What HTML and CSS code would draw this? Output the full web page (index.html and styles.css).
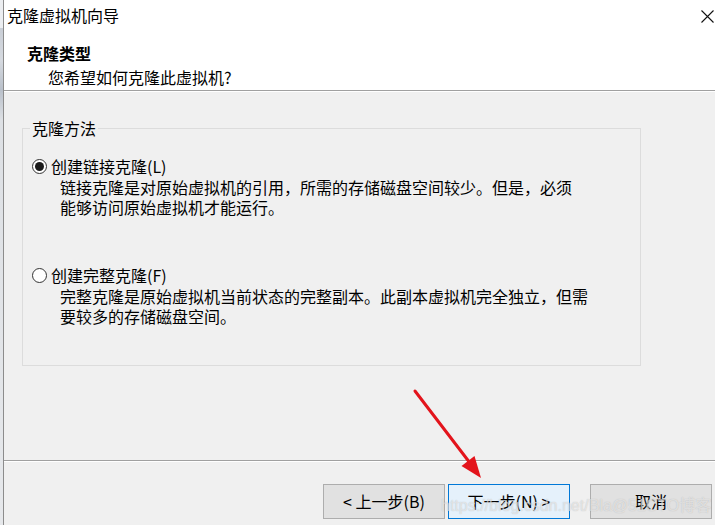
FILE: index.html
```html
<!DOCTYPE html>
<html lang="zh-CN">
<head>
<meta charset="utf-8">
<title>克隆虚拟机向导</title>
<link rel="stylesheet" href="styles.css">
</head>
<body>
<div class="screen">
  <div class="backdrop"></div>
  <div class="window">
    <div class="titlebar">
      <span class="title">克隆虚拟机向导</span>
      <svg class="close" width="13" height="13" viewBox="0 0 13 13"><path d="M0.5 0.5 L12.5 12.5 M12.5 0.5 L0.5 12.5" stroke="#111" stroke-width="1.1" fill="none"/></svg>
    </div>
    <div class="header">
      <div class="h-title">克隆类型</div>
      <div class="h-sub">您希望如何克隆此虚拟机?</div>
    </div>
    <div class="content">
      <fieldset class="group">
        <legend>克隆方法</legend>
        <div class="option">
          <div class="opt-row"><span class="radio checked"></span><span class="opt-label">创建链接克隆(L)</span></div>
          <div class="opt-desc">
            <div>链接克隆是对原始虚拟机的引用，所需的存储磁盘空间较少。但是，必须</div>
            <div>能够访问原始虚拟机才能运行。</div>
          </div>
        </div>
        <div class="option second">
          <div class="opt-row"><span class="radio"></span><span class="opt-label">创建完整克隆(F)</span></div>
          <div class="opt-desc">
            <div>完整克隆是原始虚拟机当前状态的完整副本。此副本虚拟机完全独立，但需</div>
            <div>要较多的存储磁盘空间。</div>
          </div>
        </div>
      </fieldset>
    </div>
    <div class="footer">
      <button class="btn back">&lt; 上一步(B)</button>
      <button class="btn next">下一步(N) &gt;</button>
      <button class="btn cancel">取消</button>
    </div>
  </div>
  <svg class="arrow" width="715" height="525" viewBox="0 0 715 525">
    <line x1="415" y1="391" x2="470" y2="463" stroke="#e3141c" stroke-width="3" stroke-linecap="round"/>
    <polygon points="481,478 461.5,466 474.5,456" fill="#e3141c"/>
  </svg>
  <div class="watermark">https://blog.csdn.net/Bla@51CTO博客</div>
</div>
</body>
</html>
```

FILE: styles.css
```css
html, body {
  margin: 0;
  padding: 0;
}
body {
  width: 715px;
  height: 525px;
  overflow: hidden;
  font-family: "Noto Sans CJK SC", "Noto Sans", sans-serif;
  font-size: 16px;
  color: #000;
  background: #f0f0f0;
}
.screen {
  position: relative;
  display: flex;
  width: 715px;
  height: 525px;
}
.backdrop {
  width: 3px;
  background: linear-gradient(#eceef1 0, #eceef1 28px, #c9ced6 28px, #d6dae0 60px, #b9c0ca 90px, #dde0e4 120px, #e6e8eb 100%);
}
.window {
  flex: 1;
  display: flex;
  flex-direction: column;
  border-left: 1px solid #8c8c8c;
  background: #f0f0f0;
}
.titlebar {
  height: 31px;
  flex: none;
  background: #fff;
  display: flex;
  align-items: center;
  justify-content: space-between;
  padding-left: 3px;
}
.title {
  line-height: 31px;
  font-size: 16px;
}
.close {
  margin-right: 1px;
  margin-top: 1px;
}
.header {
  height: 60px;
  flex: none;
  box-sizing: border-box;
  background: #fff;
  border-bottom: 1px solid #a0a0a0;
  padding: 11px 0 0 23px;
}
.h-title {
  font-weight: bold;
  line-height: 22px;
}
.h-sub {
  line-height: 22px;
  margin-top: 2px;
  padding-left: 21px;
}
.content {
  flex: 1;
  border-top: 1px solid #fff;
  padding: 28px 0 0 18px;
}
.group {
  margin: 0;
  width: 619px;
  height: 246px;
  box-sizing: border-box;
  border: 1px solid #dcdcdc;
  padding: 20px 0 0 0;
}
.group legend {
  margin-left: 7px;
  padding: 0 2px;
  line-height: 16px;
}
.option {
  padding-left: 9px;
}
.option.second {
  margin-top: 48px;
}
.opt-row {
  display: flex;
  align-items: center;
  height: 20px;
}
.radio {
  width: 15px;
  height: 15px;
  box-sizing: border-box;
  border: 1px solid #333;
  border-radius: 50%;
  background: #fff;
  margin-right: 4px;
  display: flex;
  align-items: center;
  justify-content: center;
  flex: none;
}
.radio.checked::after {
  content: "";
  width: 9px;
  height: 9px;
  border-radius: 50%;
  background: #1a1a1a;
}
.opt-label {
  line-height: 20px;
  white-space: nowrap;
}
.opt-desc {
  margin-top: 1px;
  padding-left: 28px;
  line-height: 20px;
  white-space: nowrap;
}
.footer {
  height: 65px;
  flex: none;
  box-sizing: border-box;
  border-top: 1px solid #a0a0a0;
  box-shadow: inset 0 1px 0 #fff;
  display: flex;
  justify-content: flex-end;
  align-items: flex-start;
  padding: 23px 3px 0 0;
}
.btn {
  width: 122px;
  height: 35px;
  box-sizing: border-box;
  font-family: "Noto Sans CJK SC", "Noto Sans", sans-serif;
  font-size: 16px;
  color: #000;
  background: #e1e1e1;
  border: 1px solid #adadad;
  padding: 0;
  line-height: 33px;
}
.btn.back {
  margin-right: 3px;
}
.btn.next {
  background: #e5f1fb;
  border-color: #0078d7;
  margin-right: 20px;
}
.arrow {
  position: absolute;
  left: 0;
  top: 0;
  pointer-events: none;
}
.watermark {
  position: absolute;
  left: 441px;
  top: 495px;
  font-family: "Liberation Sans", "Noto Sans CJK SC", sans-serif;
  font-size: 16px;
  line-height: 22px;
  color: rgba(255, 255, 255, 0.55);
  text-shadow: 0 0 1px rgba(120, 120, 120, 0.45);
  white-space: nowrap;
  pointer-events: none;
}
```
